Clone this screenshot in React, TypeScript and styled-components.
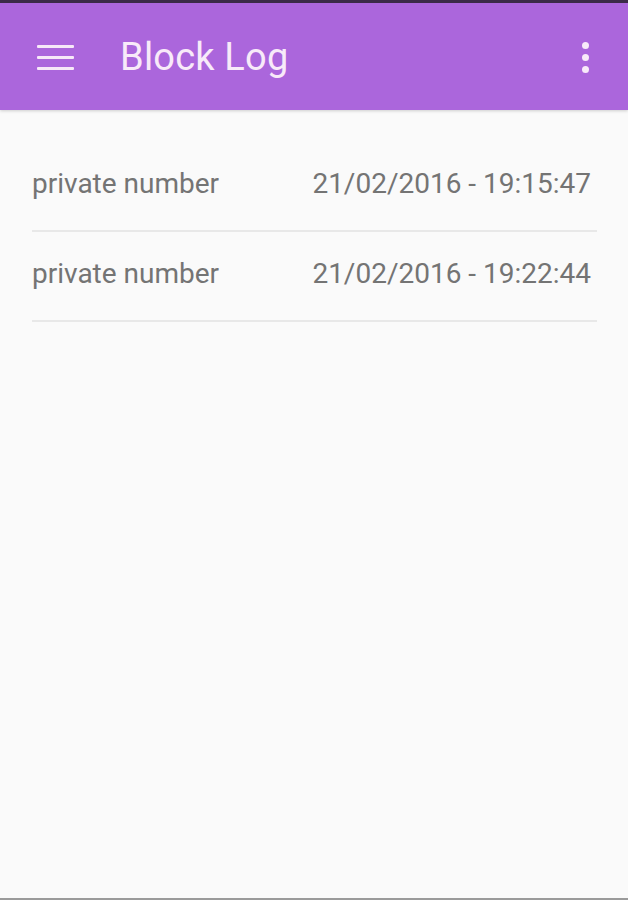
import styled, { createGlobalStyle } from "styled-components";

const GlobalStyle = createGlobalStyle`
  html, body {
    margin: 0;
    padding: 0;
    background: #fafafa;
  }
  body {
    font-family: Roboto, "Noto Sans", sans-serif;
  }
`;

const Screen = styled.div`
  width: 628px;
  height: 900px;
  display: flex;
  flex-direction: column;
  background: #fafafa;
  border-top: 3px solid #3b2a48;
  border-bottom: 2px solid #9a9a9a;
  box-sizing: border-box;
  overflow: hidden;
`;

const Toolbar = styled.header`
  height: 107px;
  flex-shrink: 0;
  display: flex;
  align-items: center;
  padding: 0 39px 0 37px;
  background: #ab66dc;
  box-shadow: 0 1px 3px rgba(0, 0, 0, 0.18);
`;

const MenuButton = styled.div`
  width: 37px;
  display: flex;
  flex-direction: column;
  gap: 8px;
  margin-top: 2px;
  span {
    height: 3px;
    border-radius: 1px;
    background: #f6e8f8;
  }
`;

const Title = styled.h1`
  flex: 1;
  margin: 0 0 0 46px;
  font-size: 38px;
  font-weight: 400;
  color: #f8eaf9;
  letter-spacing: 0.2px;
`;

const MoreButton = styled.div`
  display: flex;
  flex-direction: column;
  gap: 5px;
  margin-top: 2px;
  span {
    width: 7px;
    height: 7px;
    border-radius: 50%;
    background: #f8eaf9;
  }
`;

const List = styled.ul`
  list-style: none;
  margin: 0;
  padding: 32px 31px 0 32px;
`;

const Row = styled.li`
  height: 90px;
  display: flex;
  align-items: center;
  justify-content: space-between;
  padding: 0 6px 6px 0;
  box-sizing: border-box;
  border-bottom: 2px solid #e8e8e8;
  font-size: 28px;
  color: #747474;
`;

const entries = [
  { caller: "private number", time: "21/02/2016 - 19:15:47" },
  { caller: "private number", time: "21/02/2016 - 19:22:44" },
];

export default function App() {
  return (
    <>
      <GlobalStyle />
      <Screen>
        <Toolbar>
          <MenuButton>
            <span />
            <span />
            <span />
          </MenuButton>
          <Title>Block Log</Title>
          <MoreButton>
            <span />
            <span />
            <span />
          </MoreButton>
        </Toolbar>
        <List>
          {entries.map((e) => (
            <Row key={e.time}>
              <span>{e.caller}</span>
              <span>{e.time}</span>
            </Row>
          ))}
        </List>
      </Screen>
    </>
  );
}
